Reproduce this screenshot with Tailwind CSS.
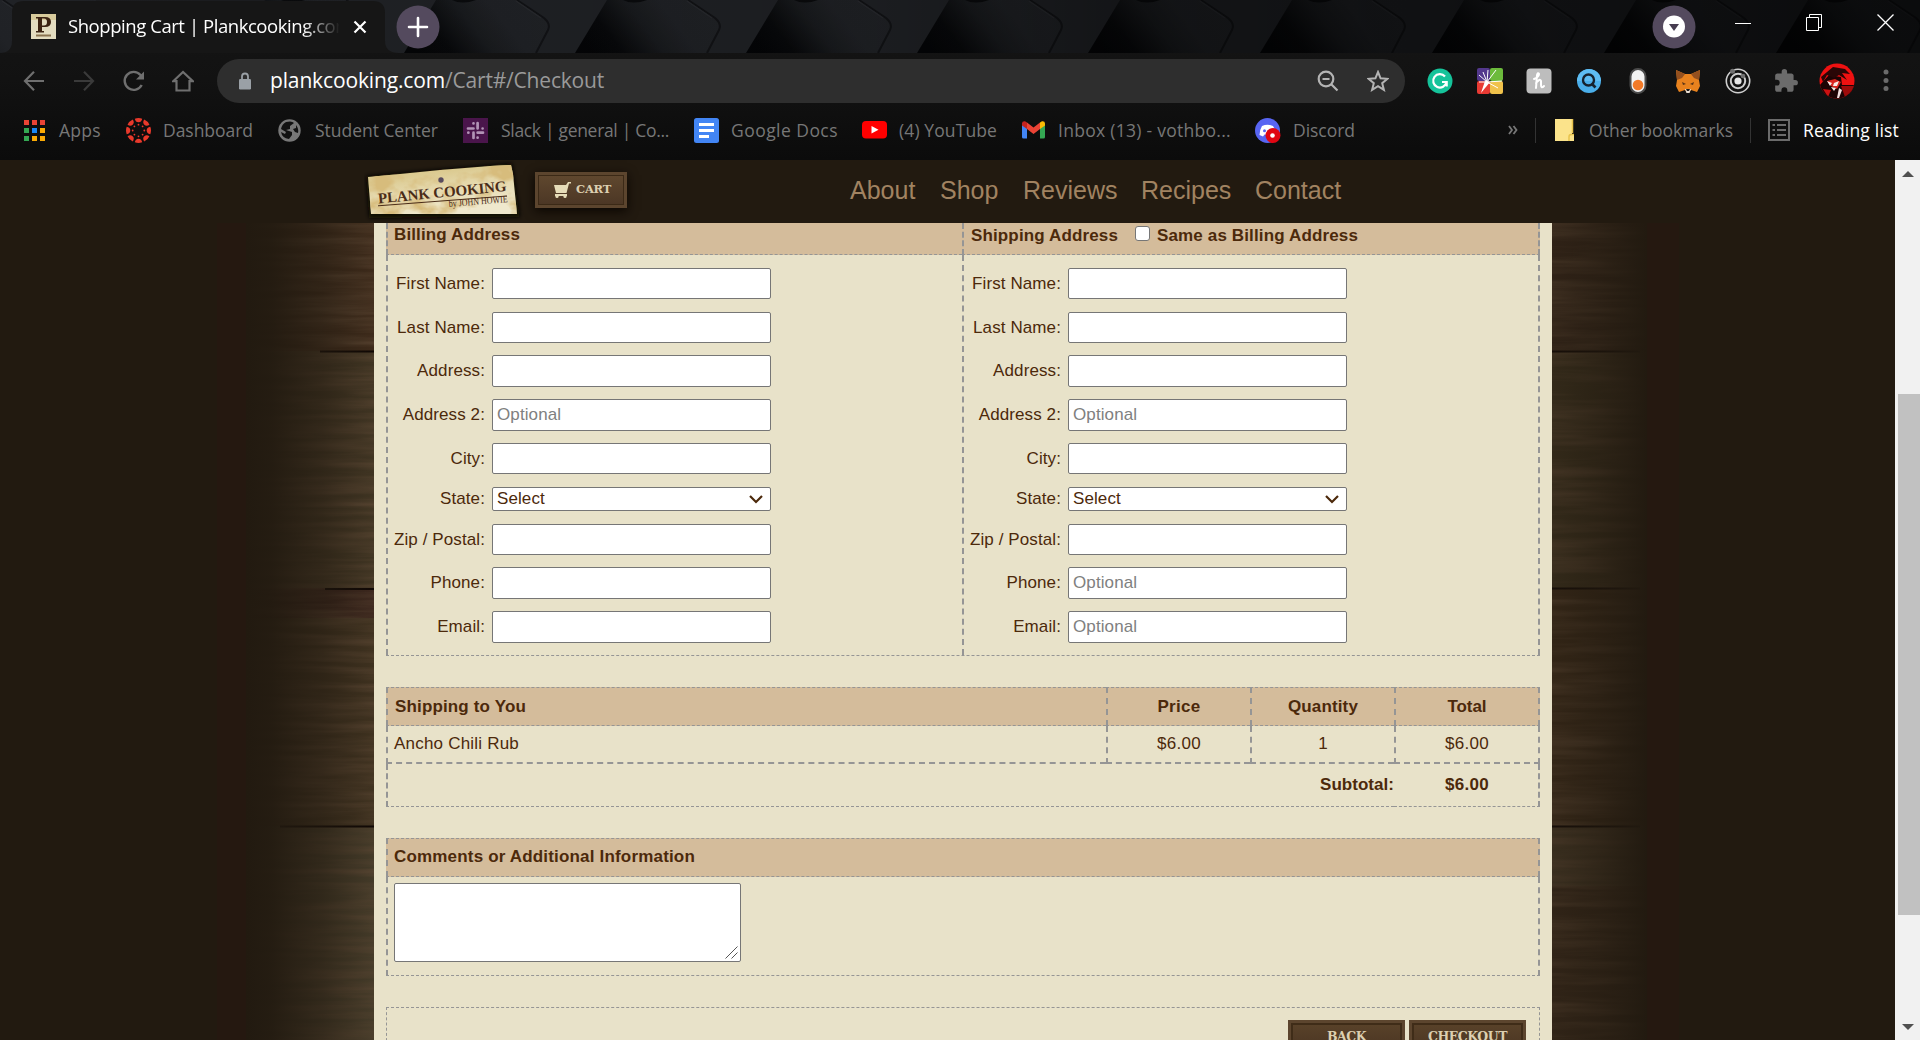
<!DOCTYPE html>
<html lang="en">
<head>
<meta charset="utf-8">
<title>Shopping Cart | Plankcooking.com</title>
<script src="https://cdn.jsdelivr.net/npm/@tailwindcss/browser@4"></script>
</head>
<body class="w-[1920px] h-[1040px] overflow-hidden bg-[#221a10] font-['Liberation_Sans',Arial,sans-serif]">
<div class="flex flex-col w-[1920px] h-[1040px]">

<!-- Browser chrome -->
<div class="relative h-[160px] shrink-0 bg-linear-to-b from-[#161616] via-[#121212] to-[#0b0b0b] font-['Open_Sans','Noto_Sans',sans-serif]">
  <!-- themed tab strip -->
  <svg class="absolute left-0 top-0" width="1920" height="53" viewBox="0 0 1920 53">
    <defs>
      <linearGradient id="sh" x1="0" y1="0.6" x2="1" y2="0.4">
        <stop offset="0" stop-color="#040507"/><stop offset="0.15" stop-color="#08090b"/><stop offset="0.34" stop-color="#191b1e"/><stop offset="0.5" stop-color="#202226"/><stop offset="1" stop-color="#222428"/>
      </linearGradient>
      <linearGradient id="dk" x1="0" x2="1"><stop offset="0" stop-color="#000" stop-opacity="0"/><stop offset="0.45" stop-color="#000" stop-opacity="0.15"/><stop offset="0.6" stop-color="#000" stop-opacity="0.42"/><stop offset="1" stop-color="#000" stop-opacity="0.66"/></linearGradient>
      <g id="hex">
        <path d="M32 0H206L172 53H0Z" fill="url(#sh)"/>
        <path d="M113 0L140 18Q147 24 144 30L132 53H172L204 0Z" fill="#202226"/>
        <path d="M113 0L140 18Q147 24 144 30L132 53" fill="none" stroke="#121316" stroke-width="2"/>
        <path d="M112 1L137 18" fill="none" stroke="#292b2f" stroke-width="1.500"/>
        <path d="M48 0Q58 5 72 0Z" fill="#0a0b0d"/>
      </g>
    </defs>
    <rect width="1920" height="53" fill="#1c1d20"/>
    <use href="#hex" x="-110"/><use href="#hex" x="233"/>
    <use href="#hex" x="404"/><use href="#hex" x="575"/><use href="#hex" x="746"/><use href="#hex" x="917"/><use href="#hex" x="1088"/><use href="#hex" x="1260"/><use href="#hex" x="1432"/><use href="#hex" x="1604"/><use href="#hex" x="1776"/>
    <rect width="1920" height="53" fill="url(#dk)"/>
    <path d="M0 53Q12 53 12 41V12Q12 1 24 1H373Q385 1 385 13V41Q385 53 399 53Z" fill="#161616"/>
  </svg>
  <div class="relative flex items-center h-[53px] text-white">
    <svg class="ml-[31px] shrink-0" width="25" height="25" viewBox="0 0 25 25"><rect width="25" height="25" fill="#e3dcc0"/><rect width="25" height="6" fill="#d8cb9c"/><path d="M5 3H14Q20 3 20 8T14 13H11V17H13V18.500H5V17H7V4.500H5ZM11 4.500V11.500H13Q16 11.500 16 8T13 4.500Z" fill="#3b2212"/><rect x="5" y="20.500" width="15" height="2" fill="#8a7350"/></svg>
    <div class="ml-[12px] w-[271px] shrink-0 h-8 overflow-hidden whitespace-nowrap text-[18.500px] leading-8 -mt-px [mask-image:linear-gradient(to_right,#000_235px,transparent_272px)]"><span data-w="284">Shopping Cart | Plankcooking.com</span></div>
    <svg class="ml-[14px] shrink-0" width="14" height="14" viewBox="0 0 14 14"><path d="M1.500 1.500L12.500 12.500M12.500 1.500L1.500 12.500" stroke="#fff" stroke-width="2.200"/></svg>
    <svg class="ml-[29px]" width="44" height="44" viewBox="0 0 44 44"><circle cx="22" cy="22" r="21.500" fill="#544a5e"/><path d="M22 13V31M13 22H31" stroke="#fff" stroke-width="2.600" stroke-linecap="round"/></svg>
    <svg class="ml-auto" width="44" height="44" viewBox="0 0 44 44"><circle cx="22" cy="22" r="21.500" fill="#544a5e"/><circle cx="22" cy="21.500" r="11" fill="#fff"/><path d="M17 19H27L22 26Z" fill="#463c50"/></svg>
    <svg class="ml-[39px] -mt-2" width="16" height="16"><path d="M0 8.500H16" stroke="#fff"/></svg>
    <svg class="ml-[55px] -mt-2" width="17" height="17" fill="none" stroke="#fff"><path d="M.5 3.500H12.500V16.500H.5ZM3.500 3.500V.5H15.500V13.500H12.500"/></svg>
    <svg class="ml-[54px] -mt-2 mr-[26px]" width="17" height="17"><path d="M.5 .5L16.500 16.500M16.500 .5L.5 16.500" stroke="#fff" stroke-width="1.300"/></svg>
  </div>

  <!-- toolbar -->
  <div class="relative flex items-center h-[44px] mt-[6px]">
    <svg class="ml-[23px] shrink-0" width="22" height="22" fill="none" stroke="#6f6f6f" stroke-width="2.200"><path d="M21 11H2.500M11 1.800L2 11L11 20.200"/></svg>
    <svg class="ml-[28px] shrink-0" width="22" height="22" fill="none" stroke="#3a3a3a" stroke-width="2.200"><path d="M1 11H19.500M11 1.800L20 11L11 20.200"/></svg>
    <svg class="ml-[28px] shrink-0" width="22" height="22" fill="none" stroke="#6f6f6f" stroke-width="2.400"><path d="M18.700 15A9 9 0 1 1 17.500 5L19 7"/><path d="M21 1.500V9.500H13Z" fill="#6f6f6f" stroke="none"/></svg>
    <svg class="ml-[27px] shrink-0" width="22" height="22" fill="none" stroke="#6f6f6f" stroke-width="2.200"><path d="M1.200 11.200L11 2L20.800 11.200H17.500V20.500H4.500V11.200Z"/></svg>
    <div class="ml-[23px] w-[1188px] h-[44px] rounded-full bg-[#2e2e2e] flex items-center shrink-0">
      <svg class="ml-[21px]" width="14" height="18" viewBox="0 0 14 18"><rect x="1" y="7" width="12" height="10.500" rx="1.200" fill="#9aa0a6"/><path d="M4 7.500V4.500a3 3 0 0 1 6 0V7.500" fill="none" stroke="#9aa0a6" stroke-width="1.800"/></svg>
      <div class="ml-[18px] text-[21px] leading-8 -mt-[3px] whitespace-nowrap text-white"><span data-w="175">plankcooking.com</span><span data-w="159" class="text-[#9a9a9a]">/Cart#/Checkout</span></div>
      <svg class="ml-auto" width="22" height="22" fill="none" stroke="#b4b4b4" stroke-width="2.200"><circle cx="9" cy="9" r="7.300"/><path d="M14.500 14.500L20.500 20.500M5.500 9H12.500"/></svg>
      <svg class="ml-[28px] mr-[16px]" width="22" height="22" viewBox="0 0 22 22" fill="none" stroke="#b4b4b4" stroke-width="2"><path d="M11 2L13.600 8.300L20.500 8.800L15.200 13.200L16.900 19.900L11 16.200L5.100 19.900L6.800 13.200L1.500 8.800L8.400 8.300Z"/></svg>
    </div>
    <svg class="ml-[22px] shrink-0" width="26" height="26" viewBox="0 0 26 26"><circle cx="13" cy="13" r="12.500" fill="#15c39a"/><path d="M18 8.500A6.700 6.700 0 1 0 19.500 14M15 14H19.700V18.500" fill="none" stroke="#fff" stroke-width="2.200"/></svg>
    <svg class="ml-[24px] shrink-0" width="26" height="26" viewBox="0 0 26 26"><rect width="13" height="13" rx="2" fill="#53388c"/><rect x="13" width="13" height="13" rx="2" fill="#6cbb3c"/><rect y="13" width="13" height="13" rx="2" fill="#e83a33"/><rect x="13" y="13" width="13" height="13" rx="2" fill="#f0c24b"/><path d="M10 14L2 7M10 14L6 4M10 14L11 2M10 14L19 2M10 14L25 13M10 14L21 20M10 14L2 14" stroke="#fff" stroke-width="1"/><path d="M4 25L8 13L13 14Z" fill="#fff"/></svg>
    <svg class="ml-[23px] shrink-0" width="26" height="26" viewBox="0 0 26 26"><rect x=".5" y=".5" width="25" height="25" rx="4" fill="#bdbdbd"/><path d="M8 11Q13 9 13 6Q12 4 11 7L10 20M10 15Q14 10 15 13V17Q15 21 18 18" fill="none" stroke="#fff" stroke-width="2" stroke-linecap="round"/></svg>
    <svg class="ml-[24px] shrink-0" width="26" height="26" viewBox="0 0 26 26"><circle cx="13" cy="13" r="12" fill="#4aaeea"/><path d="M1 13A12 12 0 0 1 25 13Z" fill="#5ebcf2"/><circle cx="12.500" cy="12" r="5.500" fill="none" stroke="#16222e" stroke-width="2.400"/><path d="M15.500 15.500L19.500 19.500" stroke="#16222e" stroke-width="2.600"/></svg>
    <svg class="ml-[27px] shrink-0" width="18" height="26" viewBox="0 0 18 26"><rect x="1.500" y="1" width="15" height="24" rx="7.500" fill="#f2f2f2" stroke="#4c4c4c" stroke-width="2"/><circle cx="9" cy="17" r="5.300" fill="#f27a28"/></svg>
    <svg class="ml-[28px] shrink-0" width="26" height="26" viewBox="0 0 26 26"><path d="M1 2L10 6H16L25 2L24 12L25 18L22 24L16 22L14 25H12L10 22L4 24L1 18L2 12Z" fill="#e8821e"/><path d="M1 2L10 6L7 10L2 12ZM25 2L16 6L19 10L24 12Z" fill="#94501f"/><path d="M7 14L11 16L8 17ZM19 14L15 16L18 17Z" fill="#5a3417"/><path d="M10 21H16L14.500 25H11.500Z" fill="#e6ddd4"/><path d="M11 21H15L14 23H12Z" fill="#1c1a19"/></svg>
    <svg class="ml-[24px] shrink-0" width="26" height="26" viewBox="0 0 26 26" fill="none" stroke="#cfcfcf"><circle cx="13" cy="13" r="11.700" stroke-width="1.600"/><circle cx="13" cy="13" r="7.200" stroke-width="2"/><circle cx="13" cy="13" r="3.600" fill="#e6e6e6" stroke="none"/><circle cx="7.500" cy="3.200" r="2.500" fill="#707070" stroke="none"/><circle cx="18" cy="8" r="2.300" fill="#707070" stroke="none"/></svg>
    <svg class="ml-[22px] shrink-0" width="26" height="26" viewBox="0 0 24 24"><path fill="#6b6b6b" d="M20.500 11H19V7c0-1.100-.9-2-2-2h-4V3.500a2.500 2.500 0 0 0-5 0V5H4c-1.100 0-2 .9-2 2v3.800h1.500a2.700 2.700 0 0 1 0 5.400H2V20c0 1.100.9 2 2 2h3.800v-1.500a2.700 2.700 0 0 1 5.400 0V22H17c1.100 0 2-.9 2-2v-4h1.500a2.500 2.500 0 0 0 0-5z"/></svg>
    <svg class="ml-[20px] shrink-0" width="36" height="36" viewBox="0 0 36 36"><defs><clipPath id="av"><circle cx="18" cy="18" r="17.500"/></clipPath></defs><g clip-path="url(#av)"><rect width="36" height="36" fill="#ee1111"/><path d="M0 23L10 12L22 14L23 22H36V36H0Z" fill="#1d0304"/><path d="M22 23H36V30L26 34Z" fill="#9e0b0b"/><path d="M2 14L14 4L26 6L31 11L23 10L28 17L20 12L15 15L8 12L4 19Z" fill="#2a0606"/><path d="M8 18L16 16L22 19L18 26L12 23Z" fill="#d9241f"/><path d="M8 18L13 20L11 23ZM15 20L20 18L18 23L14 23ZM12 24L17 25L15 28Z" fill="#f7e9e6"/><path d="M20 25L23 27L20 35H18Z" fill="#f1dcdc"/><path d="M4 26L12 27L9 34Z" fill="#c11"/></g></svg>
    <svg class="ml-[28px] shrink-0" width="6" height="26" fill="#6b6b6b"><circle cx="3" cy="4" r="2.500"/><circle cx="3" cy="12.500" r="2.500"/><circle cx="3" cy="20.500" r="2.500"/></svg>
  </div>

  <!-- bookmarks bar -->
  <div class="relative flex items-center h-[28px] mt-[13px] pl-[22px] text-[17.500px] text-[#777] whitespace-nowrap">
    <div class="w-[104px] shrink-0 flex items-center gap-[12px]"><svg class="shrink-0" width="25" height="25"><g fill="#ea4335"><path d="M2 2h5v5h-5zM10 2h5v5h-5zM18 2h5v5h-5z"/></g><path fill="#34a853" d="M2 10h5v5h-5zM2 18h5v5h-5z"/><path fill="#1a87f5" d="M10 10h5v5h-5z"/><path fill="#fbaa05" d="M18 10h5v5h-5zM10 18h5v5h-5zM18 18h5v5h-5z"/></svg><span data-w="42">Apps</span></div>
    <div class="w-[151px] shrink-0 flex items-center gap-[12px]"><svg class="shrink-0" width="25" height="25" viewBox="-12.500 -12.500 25 25"><defs><g id="cv"><path d="M-3.700 -11.800Q0 -13.200 3.700 -11.800Q3 -8.200 0 -8.200T-3.700 -11.800Z"/><circle cy="-5.800" r=".9"/></g></defs><g fill="#e8392b"><use href="#cv"/><use href="#cv" transform="rotate(45)"/><use href="#cv" transform="rotate(90)"/><use href="#cv" transform="rotate(135)"/><use href="#cv" transform="rotate(180)"/><use href="#cv" transform="rotate(225)"/><use href="#cv" transform="rotate(270)"/><use href="#cv" transform="rotate(315)"/></g></svg><span data-w="90">Dashboard</span></div>
    <div class="w-[186px] shrink-0 flex items-center gap-[13px]"><svg class="shrink-0" width="25" height="25" viewBox="0 0 25 25"><circle cx="12.500" cy="12.500" r="11.200" fill="#777"/><path d="M9 4Q15 2.500 17 5L13 8V11L9 12L15 14V17L12 21Q5 20 4 14L8 16L9 14L4 11Q5 6 9 4ZM19 7Q22 11 21 15L18 14L16 11L19 10Z" fill="#111"/></svg><span data-w="123">Student Center</span></div>
    <div class="w-[231px] shrink-0 flex items-center gap-[13px]"><svg class="shrink-0" width="25" height="25" viewBox="0 0 25 25"><rect width="25" height="25" fill="#4a154b"/><g stroke="#b294b6" stroke-width="2.700" stroke-linecap="round"><path d="M10.500 5.300V5.400M14.600 5V10.400M19.600 10.500V10.500M14.600 19.600V19.700M5.300 14.700H5.400M10.500 14.700V20M5 10.500H10.500M14.600 14.700H20"/></g></svg><span data-w="168">Slack | general | Co...</span></div>
    <div class="w-[168px] shrink-0 flex items-center gap-[12px]"><svg class="shrink-0" width="25" height="25"><rect width="25" height="25" rx="2.500" fill="#4285f4"/><path d="M5 5h15v3h-15zM5 11h15v3h-15zM5 17h10v3h-10z" fill="#fff"/></svg><span data-w="107">Google Docs</span></div>
    <div class="w-[159px] shrink-0 flex items-center gap-[12px]"><svg class="shrink-0" width="25" height="18"><rect width="25" height="17.500" rx="4" fill="#f00"/><path d="M9.500 5L16.500 8.700L9.500 12.500Z" fill="#fff"/></svg><span data-w="98">(4) YouTube</span></div>
    <div class="w-[234px] shrink-0 flex items-center gap-[12px]"><svg class="shrink-0" width="25" height="18" viewBox="0 0 25 18"><path d="M1 2V16q0 1.500 1.500 1.500H6V6Z" fill="#4285f4"/><path d="M24 2V16q0 1.500-1.500 1.500H19V6Z" fill="#34a853"/><path d="M6 1.500L12.500 6.500L19 1.500V8L12.500 13L6 8Z" fill="#ea4335"/><path d="M1 2.500Q1 0 4 .3L6 1.500V8L1 4.500Z" fill="#c5221f"/><path d="M24 2.500Q24 0 21 .3L19 1.500V8L24 4.500Z" fill="#fbbc04"/></svg><span data-w="173">Inbox (13) - vothbo...</span></div>
    <div class="w-[120px] shrink-0 flex items-center gap-[12px]"><svg class="shrink-0" width="26" height="25" viewBox="0 0 26 25"><circle cx="12.500" cy="12.500" r="12.500" fill="#5865f2"/><path d="M7 8Q12.500 5.500 18 8Q21 12 20.500 17L17 18.500L15.500 16.500H9.500L8 18.500L4.500 17Q4.500 12 7 8Z" fill="#fff"/><circle cx="9.500" cy="12.700" r="1.500" fill="#5865f2"/><circle cx="18" cy="17.500" r="7.500" fill="#e00612"/><circle cx="17.500" cy="17.500" r="2.300" fill="#fff"/></svg><span data-w="62">Discord</span></div>
    <svg class="ml-[133px] shrink-0" width="10" height="10" fill="none" stroke="#777" stroke-width="1.800"><path d="M1 1L4 5L1 9M5.500 1L8.500 5L5.500 9"/></svg>
    <div class="ml-[17px] w-px h-[25px] bg-[#333]"></div>
    <svg class="ml-[19px] shrink-0" width="20" height="24"><path d="M0 1H17V16H19V23H0Z" fill="#fbe38b"/><path d="M17.500 1V15M14 23V19Q14 16.500 16 16.500H19" stroke="#e8c34d" stroke-width="1.500" fill="none"/></svg>
    <span class="ml-[14px]" data-w="144">Other bookmarks</span>
    <div class="ml-[17px] w-px h-[25px] bg-[#333]"></div>
    <svg class="ml-[17px] shrink-0" width="22" height="22" fill="none" stroke="#6b6b6b" stroke-width="2"><rect x="1" y="1" width="20" height="20"/><path d="M4.500 6H7M9 6H18M4.500 11H7M9 11H18M4.500 16H7M9 16H18"/></svg>
    <span class="ml-[13px] text-white" data-w="96">Reading list</span>
  </div>
</div>

<!-- Page and scrollbar -->
<div class="flex h-[880px]">
  <div class="w-[1895px] flex flex-col bg-[#221a10] text-[#4c290b] text-[17px]">
    <header class="relative h-[63px] shrink-0 flex items-center">
      <svg class="ml-[364px] shrink-0" width="160" height="63" viewBox="364 0 160 63">
        <defs>
          <linearGradient id="pg" x1="0" y1="0" x2="0.4" y2="1"><stop offset="0" stop-color="#dcc78a"/><stop offset="0.3" stop-color="#dccb92"/><stop offset="0.6" stop-color="#e6dab0"/><stop offset="1" stop-color="#efe8cd"/></linearGradient>
          <filter id="stain" x="0" y="0" width="1" height="1"><feTurbulence type="fractalNoise" baseFrequency="0.035 0.05" numOctaves="4" seed="8"/><feColorMatrix values="0 0 0 0 .68  0 0 0 0 .5  0 0 0 0 .2  3.600 0 0 0 -1.550"/></filter>
          <filter id="soft"><feGaussianBlur stdDeviation="2"/></filter>
          <clipPath id="pl"><path d="M368 17L400 14L440 10L490 6L511 5L513 14L517 54L371 54Z"/></clipPath>
        </defs>
        <path d="M366 16L512 3L520 57L369 58Z" fill="#0d0904" filter="url(#soft)"/>
        <path d="M368 17L400 14L440 10L490 6L511 5L513 14L517 54L371 54Z" fill="url(#pg)"/>
        <g clip-path="url(#pl)"><rect x="364" y="0" width="156" height="60" filter="url(#stain)"/></g>
        <circle cx="441" cy="20" r="2.700" fill="#594c5e"/>
        <text transform="translate(378.500 43.500) rotate(-5.600)" font-family="Liberation Serif" font-size="15" font-weight="bold" fill="#4a2c18" textLength="129" lengthAdjust="spacing">PLANK COOKING</text>
        <path d="M378 45.800L507 36" stroke="#4a2c18"/>
        <text transform="translate(449 47) rotate(-4.700)" font-family="Liberation Serif" font-size="10" fill="#4a2c18" textLength="59" lengthAdjust="spacingAndGlyphs">by JOHN HOWIE</text>
      </svg>
      <div class="ml-[11px] w-[92px] h-[36px] -mt-[4px] bg-[#5c452e] p-[3px] shadow-[0_3px_10px_#0b0602]">
        <div class="h-full border border-[#3b2916] bg-linear-to-b from-[#5f472e] to-[#4c3725] flex items-center">
          <svg class="ml-[14px] shrink-0" width="19" height="18" viewBox="0 0 19 18"><path d="M1 4H13L15 1H18V2.500H16L13.500 12H3Z" fill="#e6dcb8"/><path d="M2 13H14V15H2Z" fill="#e6dcb8"/><circle cx="4" cy="15.500" r="1.600" fill="#e6dcb8"/><circle cx="12" cy="15.500" r="1.600" fill="#e6dcb8"/></svg>
          <span class="ml-[4px] mt-px font-['DejaVu_Serif',serif] font-bold text-[11.500px] text-[#dccfb0]" data-w="35">CART</span>
        </div>
      </div>
      <nav class="ml-[223px] -mt-[2px] flex text-[25px] text-[#a18361]">
        <a class="w-[90px]">About</a><a class="w-[83px]">Shop</a><a class="w-[118px]">Reviews</a><a class="w-[114px]">Recipes</a><a>Contact</a>
      </nav>
    </header>

    <div class="relative flex h-[817px] overflow-hidden">
      <!-- wood plank backdrop -->
      <svg class="absolute left-0 top-0" width="1895" height="817">
        <defs>
          <filter id="grain" x="0" y="0" width="1" height="1"><feTurbulence type="fractalNoise" baseFrequency="0.008 0.13" numOctaves="4" seed="5"/><feColorMatrix values="0 0 0 0 .11  0 0 0 0 .065  0 0 0 0 .035  1.300 0 0 0 -.4"/></filter>
          <linearGradient id="fl"><stop offset="0" stop-color="#221a10"/><stop offset="0.2" stop-color="#221a10" stop-opacity=".93"/><stop offset="0.6" stop-color="#221a10" stop-opacity=".55"/><stop offset="1" stop-color="#221a10" stop-opacity="0"/></linearGradient>
          <linearGradient id="fr"><stop offset="0" stop-color="#221a10" stop-opacity=".35"/><stop offset="0.5" stop-color="#221a10" stop-opacity=".65"/><stop offset="1" stop-color="#221a10"/></linearGradient>
        </defs>
        <g id="planks">
          <rect x="247" width="127" height="128" fill="#3d2a1a"/><rect x="247" y="128" width="127" height="237" fill="#3f3422"/><rect x="247" y="365" width="127" height="30" fill="#37221a"/><rect x="247" y="395" width="127" height="208" fill="#3e311f"/><rect x="247" y="603" width="127" height="214" fill="#433a28"/>
          <rect x="1552" width="95" height="128" fill="#36261a"/><rect x="1552" y="128" width="95" height="237" fill="#3b311e"/><rect x="1552" y="365" width="95" height="238" fill="#3a2a19"/><rect x="1552" y="603" width="95" height="60" fill="#413624"/><rect x="1552" y="663" width="95" height="154" fill="#38291b"/>
        </g>
        <rect x="247" width="127" height="817" filter="url(#grain)"/>
        <rect x="1552" width="95" height="817" filter="url(#grain)"/>
        <path d="M320 128.500H374M325 366H374M280 603.500H374M1552 128.500H1640M1552 365.500H1640M1552 603.500H1640" stroke="#100805" stroke-width="2"/>
        <rect x="247" width="127" height="817" fill="url(#fl)"/>
        <rect x="1552" width="95" height="817" fill="url(#fr)"/>
        <rect x="217" width="29" height="817" fill="#251810"/>
        <rect x="1647" width="32" height="817" fill="#251810"/>
      </svg>

      <main class="relative ml-[374px] w-[1178px] h-[817px] bg-[#e8e2c9] px-[12px]">
        <!-- addresses -->
        <section class="grid grid-cols-[576px_578px] border-b border-dashed border-[#959595]" id="addresses">
          <div class="h-[32px] bg-[#d4bc9b] border-l-2 border-b border-dashed border-[#959595] pl-[6px] pt-[2px] font-bold leading-[20px]"><span data-w="126">Billing Address</span></div>
          <div class="h-[32px] bg-[#d4bc9b] border-x-2 border-b border-dashed border-[#959595] pl-[7px] pt-[3px] font-bold leading-[20px] flex items-start"><span data-w="147">Shipping Address</span><span class="ml-[17px] w-[15px] h-[15px] rounded-[3px] border border-[#767676] bg-white"></span><span class="ml-[7px]" data-w="201">Same as Billing Address</span></div>
          <div class="h-[400px] border-l-2 border-dashed border-[#959595] pt-[13px] grid content-start grid-cols-[97px_279px] gap-x-[7px] items-center leading-5 tracking-[0.1px]">
            <label class="text-right">First Name:</label><input class="h-[31px] bg-white border border-[#767676] rounded-[2px] px-1">
            <label class="text-right mt-[13px]">Last Name:</label><input class="h-[31px] mt-[13px] bg-white border border-[#767676] rounded-[2px] px-1">
            <label class="text-right mt-[12px]">Address:</label><input class="h-[32px] mt-[12px] bg-white border border-[#767676] rounded-[2px] px-1">
            <label class="text-right mt-[12px]">Address 2:</label><input placeholder="Optional" class="h-[32px] mt-[12px] bg-white border border-[#767676] rounded-[2px] px-1 placeholder:text-[#808080]">
            <label class="text-right mt-[12px]">City:</label><input class="h-[31px] mt-[12px] bg-white border border-[#767676] rounded-[2px] px-1">
            <label class="text-right mt-[13px]">State:</label><div class="h-[24px] mt-[13px] bg-white border border-[#767676] rounded-[2px] px-1 flex items-center justify-between"><span>Select</span><svg class="mr-[3px]" width="14" height="9" fill="none" stroke="#4c290b" stroke-width="2.200"><path d="M1 1L7 7L13 1"/></svg></div>
            <label class="text-right mt-[13px]">Zip / Postal:</label><input class="h-[31px] mt-[13px] bg-white border border-[#767676] rounded-[2px] px-1">
            <label class="text-right mt-[12px]">Phone:</label><input class="h-[32px] mt-[12px] bg-white border border-[#767676] rounded-[2px] px-1">
            <label class="text-right mt-[12px]">Email:</label><input class="h-[32px] mt-[12px] bg-white border border-[#767676] rounded-[2px] px-1">
          </div>
          <div class="h-[400px] border-x-2 border-dashed border-[#959595] pt-[13px] grid content-start grid-cols-[97px_279px] gap-x-[7px] items-center leading-5 tracking-[0.1px]">
            <label class="text-right">First Name:</label><input class="h-[31px] bg-white border border-[#767676] rounded-[2px] px-1">
            <label class="text-right mt-[13px]">Last Name:</label><input class="h-[31px] mt-[13px] bg-white border border-[#767676] rounded-[2px] px-1">
            <label class="text-right mt-[12px]">Address:</label><input class="h-[32px] mt-[12px] bg-white border border-[#767676] rounded-[2px] px-1">
            <label class="text-right mt-[12px]">Address 2:</label><input placeholder="Optional" class="h-[32px] mt-[12px] bg-white border border-[#767676] rounded-[2px] px-1 placeholder:text-[#808080]">
            <label class="text-right mt-[12px]">City:</label><input class="h-[31px] mt-[12px] bg-white border border-[#767676] rounded-[2px] px-1">
            <label class="text-right mt-[13px]">State:</label><div class="h-[24px] mt-[13px] bg-white border border-[#767676] rounded-[2px] px-1 flex items-center justify-between"><span>Select</span><svg class="mr-[3px]" width="14" height="9" fill="none" stroke="#4c290b" stroke-width="2.200"><path d="M1 1L7 7L13 1"/></svg></div>
            <label class="text-right mt-[13px]">Zip / Postal:</label><input class="h-[31px] mt-[13px] bg-white border border-[#767676] rounded-[2px] px-1">
            <label class="text-right mt-[12px]">Phone:</label><input placeholder="Optional" class="h-[32px] mt-[12px] bg-white border border-[#767676] rounded-[2px] px-1 placeholder:text-[#808080]">
            <label class="text-right mt-[12px]">Email:</label><input placeholder="Optional" class="h-[32px] mt-[12px] bg-white border border-[#767676] rounded-[2px] px-1 placeholder:text-[#808080]">
          </div>
        </section>

        <!-- order lines -->
        <section class="mt-[31px] grid grid-cols-[720px_144px_144px_146px]">
          <div class="h-[39px] bg-[#d4bc9b] border-l-2 border-y border-dashed border-[#959595] pl-[7px] font-bold leading-[38px]"><span data-w="131">Shipping to You</span></div>
          <div class="h-[39px] bg-[#d4bc9b] border-l-2 border-y border-dashed border-[#959595] text-center font-bold leading-[38px]"><span data-w="43">Price</span></div>
          <div class="h-[39px] bg-[#d4bc9b] border-l-2 border-y border-dashed border-[#959595] text-center font-bold leading-[38px]"><span data-w="70">Quantity</span></div>
          <div class="h-[39px] bg-[#d4bc9b] border-x-2 border-y border-dashed border-[#959595] text-center font-bold leading-[38px]"><span data-w="39">Total</span></div>
          <div class="h-[38px] border-l-2 border-b-2 border-dashed border-[#959595] pl-[6px] leading-[36px]"><span data-w="125">Ancho Chili Rub</span></div>
          <div class="h-[38px] border-l-2 border-b-2 border-dashed border-[#959595] text-center leading-[36px]"><span data-w="44">$6.00</span></div>
          <div class="h-[38px] border-l-2 border-b-2 border-dashed border-[#959595] text-center leading-[36px]">1</div>
          <div class="h-[38px] border-x-2 border-b-2 border-dashed border-[#959595] text-center leading-[36px]"><span data-w="44">$6.00</span></div>
          <div class="col-span-3 h-[43px] border-l-2 border-b border-dashed border-[#959595] text-right font-bold leading-[42px]"><span data-w="74">Subtotal:</span></div>
          <div class="h-[43px] border-r-2 border-b border-dashed border-[#959595] text-center font-bold leading-[42px] pl-[2px]"><span data-w="44">$6.00</span></div>
        </section>

        <!-- comments -->
        <section class="mt-[31px]">
          <div class="h-[39px] bg-[#d4bc9b] border-x-2 border-y border-dashed border-[#959595] pl-[6px] font-bold leading-[36px]"><span data-w="301">Comments or Additional Information</span></div>
          <div class="h-[99px] border-x-2 border-b border-dashed border-[#959595] pt-[6px] pl-[6px]">
            <div class="w-[347px] h-[79px] bg-white border border-[#767676] rounded-[2px] flex items-end justify-end p-[2px]"><svg width="13" height="13"><path d="M.5 12.500L12.500 .5M6.500 12.500L12.500 6.500" stroke="#555"/></svg></div>
          </div>
        </section>

        <section class="mt-[31px] h-[60px] border border-dashed border-[#959595] pt-[12px] pr-[13px] flex justify-end gap-[4px] font-['DejaVu_Serif',serif] font-bold text-[12.500px] text-[#dccfb0]">
          <div class="w-[117px] h-[36px] bg-[#5c452e] p-[3px]"><div class="h-full border-2 border-[#3f2c18] bg-linear-to-b from-[#584129] to-[#4a3422] text-center leading-[23px]"><span data-w="39">BACK</span></div></div>
          <div class="w-[117px] h-[36px] bg-[#5c452e] p-[3px]"><div class="h-full border-2 border-[#3f2c18] bg-linear-to-b from-[#584129] to-[#4a3422] text-center leading-[23px]"><span data-w="79">CHECKOUT</span></div></div>
        </section>
      </main>
    </div>
  </div>
  <div class="w-[25px] bg-[#f1f1f1] flex flex-col items-center">
    <svg class="mt-[11px]" width="14" height="6"><path d="M1 6L7 0L13 6Z" fill="#505050"/></svg>
    <div class="mt-[217px] ml-[3px] w-[22px] h-[521px] bg-[#c1c1c1]"></div>
    <svg class="mt-auto mb-[10px]" width="14" height="6"><path d="M1 0L7 6L13 0Z" fill="#505050"/></svg>
  </div>
</div>
</div>
<script>
// Track each label so that it fills its designed width once styles and fonts are in.
function fitLabels() {
  document.querySelectorAll('[data-w]').forEach(function (el) {
    el.style.letterSpacing = '0px';
    var extra = (+el.dataset.w - el.getBoundingClientRect().width) / el.textContent.length;
    el.style.letterSpacing = extra.toFixed(3) + 'px';
  });
}
window.addEventListener('load', fitLabels);
document.fonts.ready.then(fitLabels);
</script>
</body>
</html>
